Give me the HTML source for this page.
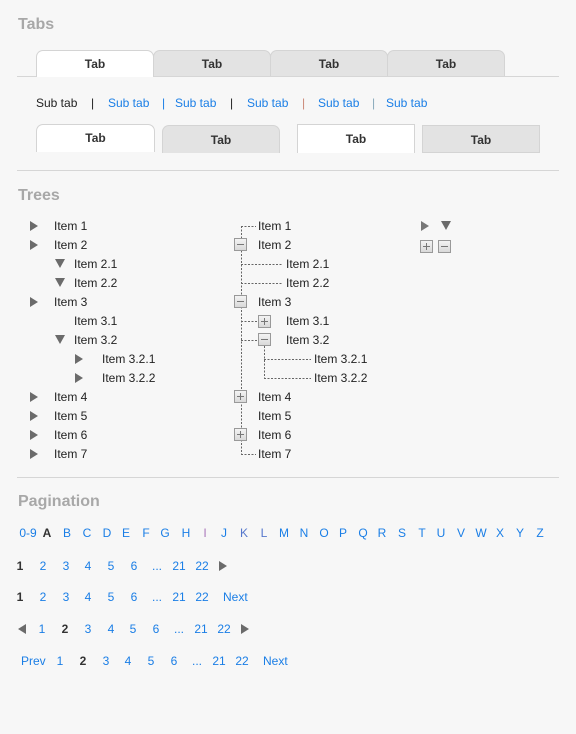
<!DOCTYPE html>
<html><head><meta charset="utf-8"><style>
body{margin:0;width:576px;height:734px;background:#f7f7f7;font-family:"Liberation Sans",Arial,sans-serif;font-size:12px;color:#222;position:relative;overflow:hidden}
.a{position:absolute;line-height:14px;white-space:nowrap}
.h{position:absolute;font-weight:bold;font-size:16px;color:#a8a8a8;left:18px}
.hr{position:absolute;left:17px;width:542px;height:1px;background:#d6d6d6}
.tab{position:absolute;height:26px;border:1px solid #d4d4d4;border-bottom:none;background:#e3e3e3;border-radius:7px 7px 0 0;text-align:center;font-weight:bold;line-height:26px;box-sizing:border-box;color:#333}
.w{background:#fff}
.l{color:#1a7ee6}
.s{color:#888}
.tr{position:absolute;width:0;height:0;border-top:5px solid transparent;border-bottom:5px solid transparent;border-left:8px solid #6b6b6b}
.td{position:absolute;width:0;height:0;border-left:5px solid transparent;border-right:5px solid transparent;border-top:9px solid #6b6b6b}
.tl{position:absolute;width:0;height:0;border-top:5px solid transparent;border-bottom:5px solid transparent;border-right:8px solid #6b6b6b}
.c{position:absolute;width:20px;text-align:center;line-height:14px;color:#1a7ee6}
.b{color:#333;font-weight:bold}
</style></head><body>
<div class="h" style="top:16px">Tabs</div>
<div class="hr" style="top:76px"></div>
<div class="tab w" style="left:36px;top:50px;width:118px;height:27px">Tab</div>
<div class="tab" style="left:153px;top:50px;width:118px">Tab</div>
<div class="tab" style="left:270px;top:50px;width:118px">Tab</div>
<div class="tab" style="left:387px;top:50px;width:118px">Tab</div>

<div class="a" style="left:36px;top:96px">Sub tab</div>
<div class="a" style="left:91px;top:96px">|</div>
<div class="a l" style="left:108px;top:96px">Sub tab</div>
<div class="a l" style="left:162px;top:96px">|</div>
<div class="a l" style="left:175px;top:96px">Sub tab</div>
<div class="a" style="left:230px;top:96px">|</div>
<div class="a l" style="left:247px;top:96px">Sub tab</div>
<div class="a" style="left:302px;top:96px;color:#c87">|</div>
<div class="a l" style="left:318px;top:96px">Sub tab</div>
<div class="a s" style="left:372px;top:96px;color:#8ab">|</div>
<div class="a l" style="left:386px;top:96px">Sub tab</div>

<div class="tab w" style="left:36px;top:124px;width:119px;height:28px;line-height:26px">Tab</div>
<div class="tab" style="left:162px;top:125px;width:118px;height:28px;line-height:28px">Tab</div>
<div class="tab w" style="left:297px;top:124px;width:118px;height:29px;border-radius:0;line-height:29px">Tab</div>
<div class="tab" style="left:422px;top:125px;width:118px;height:28px;border-radius:0;border-bottom:1px solid #d4d4d4;line-height:28px">Tab</div>

<div class="hr" style="top:170px"></div>
<div class="h" style="top:187px">Trees</div>

<!-- left tree -->
<div class="tr" style="left:30px;top:221px"></div><div class="a" style="left:54px;top:219px">Item 1</div>
<div class="tr" style="left:30px;top:240px"></div><div class="a" style="left:54px;top:238px">Item 2</div>
<div class="td" style="left:55px;top:259px"></div><div class="a" style="left:74px;top:257px">Item 2.1</div>
<div class="td" style="left:55px;top:278px"></div><div class="a" style="left:74px;top:276px">Item 2.2</div>
<div class="tr" style="left:30px;top:297px"></div><div class="a" style="left:54px;top:295px">Item 3</div>
<div class="a" style="left:74px;top:314px">Item 3.1</div>
<div class="td" style="left:55px;top:335px"></div><div class="a" style="left:74px;top:333px">Item 3.2</div>
<div class="tr" style="left:75px;top:354px"></div><div class="a" style="left:102px;top:352px">Item 3.2.1</div>
<div class="tr" style="left:75px;top:373px"></div><div class="a" style="left:102px;top:371px">Item 3.2.2</div>
<div class="tr" style="left:30px;top:392px"></div><div class="a" style="left:54px;top:390px">Item 4</div>
<div class="tr" style="left:30px;top:411px"></div><div class="a" style="left:54px;top:409px">Item 5</div>
<div class="tr" style="left:30px;top:430px"></div><div class="a" style="left:54px;top:428px">Item 6</div>
<div class="tr" style="left:30px;top:449px"></div><div class="a" style="left:54px;top:447px">Item 7</div>

<!-- middle tree -->
<svg style="position:absolute;left:0;top:0" width="576" height="734">
<g stroke="#666" stroke-width="1" stroke-dasharray="2,1.5" fill="none">
<path d="M241.5 226V454M241 226.5H256M241 454.5H256M241 264.5H283M241 283.5H283M241 321.5H258M241 340.5H258M264.5 346V378M264 359.5H311M264 378.5H311"/>
</g>
<defs><linearGradient id="g" x1="0" y1="0" x2="0" y2="1"><stop offset="0" stop-color="#f4f4f4"/><stop offset="1" stop-color="#d8d8d8"/></linearGradient></defs>
<g stroke="#999" fill="url(#g)">
<rect x="234.5" y="238.5" width="12" height="12"/>
<rect x="234.5" y="295.5" width="12" height="12"/>
<rect x="258.5" y="315.5" width="12" height="12"/>
<rect x="258.5" y="333.5" width="12" height="12"/>
<rect x="234.5" y="390.5" width="12" height="12"/>
<rect x="234.5" y="428.5" width="12" height="12"/>
<rect x="420.5" y="240.5" width="12" height="12"/>
<rect x="438.5" y="240.5" width="12" height="12"/>
</g>
<g stroke="#777">
<path d="M237 244.5H244M237 301.5H244M261 339.5H268M441 246.5H448"/>
<path d="M261 321.5H268M264.5 318V325M237 396.5H244M240.5 393V400M237 434.5H244M240.5 431V438M423 246.5H430M426.5 243V250"/>
</g>
</svg>
<div class="a" style="left:258px;top:219px">Item 1</div>
<div class="a" style="left:258px;top:238px">Item 2</div>
<div class="a" style="left:286px;top:257px">Item 2.1</div>
<div class="a" style="left:286px;top:276px">Item 2.2</div>
<div class="a" style="left:258px;top:295px">Item 3</div>
<div class="a" style="left:286px;top:314px">Item 3.1</div>
<div class="a" style="left:286px;top:333px">Item 3.2</div>
<div class="a" style="left:314px;top:352px">Item 3.2.1</div>
<div class="a" style="left:314px;top:371px">Item 3.2.2</div>
<div class="a" style="left:258px;top:390px">Item 4</div>
<div class="a" style="left:258px;top:409px">Item 5</div>
<div class="a" style="left:258px;top:428px">Item 6</div>
<div class="a" style="left:258px;top:447px">Item 7</div>

<div class="tr" style="left:421px;top:221px;border-left-color:#777"></div>
<div class="td" style="left:441px;top:221px"></div>

<div class="hr" style="top:477px"></div>
<div class="h" style="top:493px">Pagination</div>

<!-- alphabet -->
<div class="c" style="left:18px;top:526px">0-9</div>
<div class="c b" style="left:37px;top:526px">A</div>
<div class="c" style="left:57px;top:526px">B</div>
<div class="c" style="left:77px;top:526px">C</div>
<div class="c" style="left:97px;top:526px">D</div>
<div class="c" style="left:116px;top:526px">E</div>
<div class="c" style="left:136px;top:526px">F</div>
<div class="c" style="left:155px;top:526px">G</div>
<div class="c" style="left:176px;top:526px">H</div>
<div class="c" style="left:195px;top:526px;color:#a7b">I</div>
<div class="c" style="left:214px;top:526px">J</div>
<div class="c" style="left:234px;top:526px;color:#57c">K</div>
<div class="c" style="left:254px;top:526px;color:#57c">L</div>
<div class="c" style="left:274px;top:526px">M</div>
<div class="c" style="left:294px;top:526px">N</div>
<div class="c" style="left:314px;top:526px">O</div>
<div class="c" style="left:333px;top:526px">P</div>
<div class="c" style="left:353px;top:526px">Q</div>
<div class="c" style="left:372px;top:526px">R</div>
<div class="c" style="left:392px;top:526px">S</div>
<div class="c" style="left:412px;top:526px">T</div>
<div class="c" style="left:431px;top:526px">U</div>
<div class="c" style="left:451px;top:526px">V</div>
<div class="c" style="left:471px;top:526px">W</div>
<div class="c" style="left:490px;top:526px">X</div>
<div class="c" style="left:510px;top:526px">Y</div>
<div class="c" style="left:530px;top:526px">Z</div>

<!-- row1 -->
<div class="c b" style="left:10px;top:559px">1</div>
<div class="c" style="left:33px;top:559px">2</div>
<div class="c" style="left:56px;top:559px">3</div>
<div class="c" style="left:78px;top:559px">4</div>
<div class="c" style="left:101px;top:559px">5</div>
<div class="c" style="left:124px;top:559px">6</div>
<div class="c" style="left:147px;top:559px">...</div>
<div class="c" style="left:169px;top:559px">21</div>
<div class="c" style="left:192px;top:559px">22</div>
<div class="tr" style="left:219px;top:561px"></div>
<!-- row2 -->
<div class="c b" style="left:10px;top:590px">1</div>
<div class="c" style="left:33px;top:590px">2</div>
<div class="c" style="left:56px;top:590px">3</div>
<div class="c" style="left:78px;top:590px">4</div>
<div class="c" style="left:101px;top:590px">5</div>
<div class="c" style="left:124px;top:590px">6</div>
<div class="c" style="left:147px;top:590px">...</div>
<div class="c" style="left:169px;top:590px">21</div>
<div class="c" style="left:192px;top:590px">22</div>
<div class="a l" style="left:223px;top:590px">Next</div>
<!-- row3 -->
<div class="tl" style="left:18px;top:624px"></div>
<div class="c" style="left:32px;top:622px">1</div>
<div class="c b" style="left:55px;top:622px">2</div>
<div class="c" style="left:78px;top:622px">3</div>
<div class="c" style="left:101px;top:622px">4</div>
<div class="c" style="left:123px;top:622px">5</div>
<div class="c" style="left:146px;top:622px">6</div>
<div class="c" style="left:169px;top:622px">...</div>
<div class="c" style="left:191px;top:622px">21</div>
<div class="c" style="left:214px;top:622px">22</div>
<div class="tr" style="left:241px;top:624px"></div>
<!-- row4 -->
<div class="a l" style="left:21px;top:654px">Prev</div>
<div class="c" style="left:50px;top:654px">1</div>
<div class="c b" style="left:73px;top:654px">2</div>
<div class="c" style="left:96px;top:654px">3</div>
<div class="c" style="left:118px;top:654px">4</div>
<div class="c" style="left:141px;top:654px">5</div>
<div class="c" style="left:164px;top:654px">6</div>
<div class="c" style="left:187px;top:654px">...</div>
<div class="c" style="left:209px;top:654px">21</div>
<div class="c" style="left:232px;top:654px">22</div>
<div class="a l" style="left:263px;top:654px">Next</div>
</body></html>
